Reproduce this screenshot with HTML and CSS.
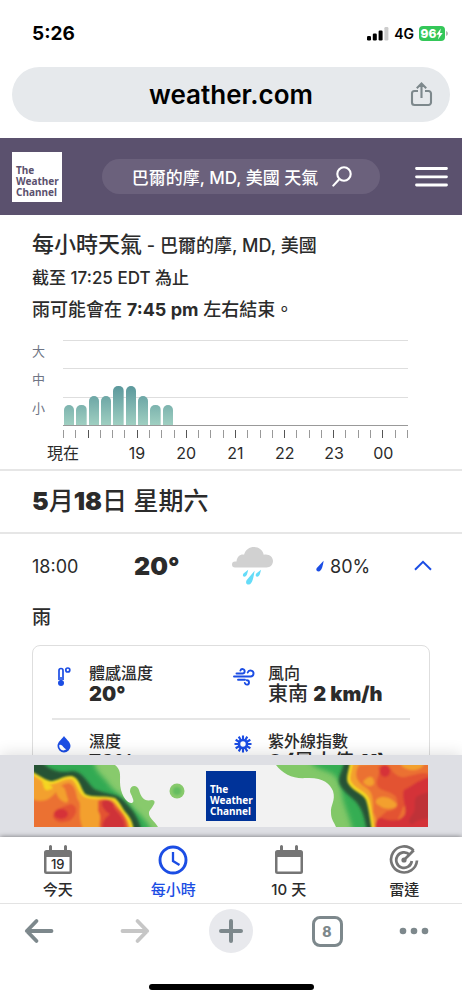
FILE: index.html
```html
<!DOCTYPE html>
<html lang="zh-Hant">
<head>
<meta charset="utf-8">
<meta name="viewport" content="width=device-width, initial-scale=1">
<title>每小時天氣 - 巴爾的摩, MD, 美國</title>
<link rel="stylesheet" href="styles.css">
</head>
<body>
<div class="app">
  <div class="status-bar">
    <span class="clock">5:26</span>
    <div class="status-icons">
      <svg class="signal" width="22" height="14" viewBox="0 0 22 14" aria-hidden="true">
        <rect x="0" y="9" width="4" height="4.5" rx="1.2"/>
        <rect x="5.8" y="6.5" width="4" height="7" rx="1.2"/>
        <rect x="11.6" y="3.5" width="4" height="10" rx="1.2"/>
        <rect x="17.4" y="0" width="4" height="13.500" rx="1.2" fill="#ccc"/>
      </svg>
      <span class="network">4G</span>
      <div class="power">
        <span class="battery"><span>96</span><svg width="7" height="12" viewBox="0 0 7 12" aria-hidden="true"><path d="M4.800 0.500 0.300 6.800h2.700L2 11.500 6.700 5H4z" fill="#fff"/></svg></span>
        <svg width="2" height="5" viewBox="0 0 2 5" aria-hidden="true"><path fill="#b5b5b5" d="M0 0c2.600.800 2.600 4.200 0 5z"/></svg>
      </div>
    </div>
  </div>

  <div class="url-bar">
    <input class="url" type="text" value="weather.com" aria-label="網址">
    <button class="share" aria-label="分享">
      <svg width="24" height="26" viewBox="0 0 24 26" fill="none" stroke="#7d888c" stroke-width="2.100">
        <path d="M8 9H4.500A2.500 2.500 0 0 0 2 11.500v9A2.500 2.500 0 0 0 4.500 23h14a2.500 2.500 0 0 0 2.500-2.500v-9A2.500 2.500 0 0 0 18.500 9H15M11.500 16V1.500M6.800 6.200l4.700-4.700 4.700 4.700"/>
      </svg>
    </button>
  </div>

  <header class="site-header">
    <a class="logo" href="#">The<br>Weather<br>Channel</a>
    <button class="search">
      <span>巴爾的摩, MD, 美國 天氣</span>
      <svg width="20" height="21" viewBox="0 0 20 21" fill="none" stroke="#fff" stroke-width="2.100" stroke-linecap="round" aria-hidden="true">
        <circle cx="12" cy="8" r="6.700"/><path d="M7.200 13.200 1.300 19.600"/>
      </svg>
    </button>
    <button class="menu" aria-label="選單">
      <svg width="33" height="22" viewBox="0 0 33 22" stroke="#fff" stroke-width="2.800" stroke-linecap="round"><path d="M1.500 2.500h30M1.500 10.800h30M1.500 19h30"/></svg>
    </button>
  </header>

  <main class="content">
    <section class="summary">
      <h1><span class="title">每小時天氣</span> - 巴爾的摩, MD, 美國</h1>
      <p>截至 17:25 EDT 為止</p>
      <p class="outlook">雨可能會在 <strong>7:45 pm</strong> 左右結束。</p>

      <div class="chart">
        <div class="levels"><span>大</span><span>中</span><span>小</span></div>
        <div class="plot">
          <div class="lines"><i></i><i></i><i></i></div>
          <div class="bars">
            <i class="low"></i><i class="low"></i><i class="mid"></i><i class="mid"></i><i class="high"></i><i class="high"></i><i class="mid"></i><i class="low"></i><i class="low"></i>
          </div>
        </div>
        <div class="ticks">
          <i></i><i></i><i></i><i></i><i></i><i></i><i></i><i></i><i></i><i></i><i></i><i></i><i></i><i></i><i></i><i></i><i></i><i></i><i></i><i></i><i></i><i></i><i></i><i></i><i></i><i></i><i></i><i></i><i></i>
        </div>
        <div class="hours">
          <span class="now">現在</span><span></span><span>19</span><span>20</span><span>21</span><span>22</span><span>23</span><span>00</span><span></span>
        </div>
      </div>
    </section>

    <h2 class="day"><b>5</b>月<b>18</b>日 星期六</h2>

    <section class="hour">
      <div class="hour-row">
        <span class="time">18:00</span>
        <span class="temp">20°</span>
        <svg class="sky" width="42" height="40" viewBox="0 0 42 40" aria-label="雨">
          <path fill="#d1d1d1" d="M3 21.500a3 3 0 0 1 0-6h1.500C5 10.500 8.500 8 12 8.700 13.500 3.500 17.500 1 22 1c5 0 8.800 3.200 9.700 7.700C36.500 7.500 41 10.500 41 15c0 3.700-2.800 6.500-6.500 6.500H3z"/>
          <path fill="#65dcf8" d="M16.200 23.800c-.7 3-1.200 7-3.800 7-2 0-1.700-2.200-.9-3.200zM22.600 24.800c-.8 5-2 13.800-5.800 13.800-2.800 0-3.400-2.600-2-4.600zM29 23.800c-.7 3-1.200 7-3.800 7-2 0-1.700-2.200-.9-3.200z"/>
        </svg>
        <span class="rain">
          <svg width="8" height="12" viewBox="0 0 8 12" aria-hidden="true"><path fill="#1b4de4" d="M7.600 0.800C7 5 5.800 11.500 2.500 11.500.300 11.500-.200 9.500.800 8z"/></svg>
          80%
        </span>
        <button class="collapse" aria-label="收合">
          <svg width="18" height="12" viewBox="0 0 18 12" fill="none" stroke="#1b4de4" stroke-width="2"><path d="M1 9.800 9 1.800l8 8"/></svg>
        </button>
      </div>
      <p class="phrase">雨</p>
      <dl class="details">
        <div class="detail">
          <svg width="24" height="24" viewBox="0 0 24 24" fill="none" stroke="#1b4de4" aria-hidden="true">
            <path d="M7 16V6.500a2 2 0 0 1 4 0V16" stroke-width="1.700"/><circle cx="9" cy="19" r="3" fill="#1b4de4" stroke="none"/><path d="M9 13v6" stroke-width="1.600"/><circle cx="15.800" cy="6" r="2" stroke-width="1.700"/>
          </svg>
          <dt>體感溫度</dt><dd><b>20°</b></dd>
        </div>
        <div class="detail">
          <svg width="24" height="24" viewBox="0 0 24 24" fill="none" stroke="#1b4de4" stroke-width="1.900" stroke-linecap="round" aria-hidden="true">
            <path d="M3 12.500h16.500a3 3 0 1 0-2.800-4M5.500 9.500h6a2.200 2.200 0 1 0-2.100-3M7 15.800h7M13.800 19c.5 1.200 1.200 1.600 2 1.600a2.200 2.200 0 0 0 0-4.400"/>
          </svg>
          <dt>風向</dt><dd>東南 <b>2 km/h</b></dd>
        </div>
        <div class="detail">
          <svg width="24" height="24" viewBox="0 0 24 24" aria-hidden="true">
            <path fill="#1b4de4" d="M12 4c2 3 6.500 6 6.500 10a6.500 6.500 0 0 1-13 0C5.500 10 10 7 12 4z"/><path fill="#fff" d="M7.300 13c3-1.200 3.500 2.500 7 4.300-3.300 2.700-7.600 0-7-4.300z"/>
          </svg>
          <dt>濕度</dt><dd><b>76%</b></dd>
        </div>
        <div class="detail">
          <svg width="24" height="24" viewBox="0 0 24 24" fill="none" stroke="#1b4de4" aria-hidden="true">
            <circle cx="12" cy="12" r="4" stroke-width="2.600"/>
            <path stroke-width="2.100" d="M12 3.500v4M12 16.500v4M3.500 12h4M16.500 12h4M7.750 4.640l2 3.460M14.250 15.900l2 3.460M4.640 7.750l3.460 2M15.900 14.250l3.460 2M4.640 16.250l3.460-2M15.900 9.750l3.460-2M7.750 19.360l2-3.460M14.250 8.100l2-3.460"/>
          </svg>
          <dt>紫外線指數</dt><dd><b>0 (</b>最大值 <b>11)</b></dd>
        </div>
      </dl>
    </section>
  </main>

  <aside class="ad">
    <a class="banner" href="#">
      <svg class="radar" width="394" height="62" viewBox="0 0 394 62" aria-hidden="true">
        <defs>
          <filter id="soft" x="-20%" y="-20%" width="140%" height="140%"><feGaussianBlur stdDeviation="2.500"/></filter>
          <filter id="band" x="-20%" y="-20%" width="140%" height="140%"><feGaussianBlur stdDeviation="1.500"/></filter>
          <filter id="edge" x="-20%" y="-20%" width="140%" height="140%"><feGaussianBlur stdDeviation="0.900"/></filter>
          <clipPath id="cl"><path d="M0 0H81C87 5 86 9 86 17c0 11 6 21 11 21 6 0-1-9-1-12 0-6 7-7 9-1 2 7 5 12 13 10 6 1 0 7-3 12-1 6 6 9 9 15H0z"/></clipPath>
          <clipPath id="cr"><path d="M242 0c7 9 17 14 30 13 16-1 24 5 27 13 3 10-3 14-2 22 0 6 3 9 5 14h92V0z"/></clipPath>
        </defs>
        <g clip-path="url(#cl)">
          <path fill="#88ca6c" d="M0 0h130v62H0z"/>
          <path filter="url(#soft)" fill="#31aa52" d="M-5-5H60C60 6 68 10 74 18C78 26 90 30 98 42C106 50 114 56 118 67H-5z"/>
          <path filter="url(#band)" fill="#285334" d="M-5-5H6C14 4 24 9 38 6C48 6 52 16 60 24C72 30 84 27 92 38C100 46 105 54 108 67H-5z"/>
          <g filter="url(#edge)">
            <path fill="#f5dc22" d="M-5 5C2 8 9 14 16 16C24 16 30 10 38 11C46 14 46 22 51 29C58 33 72 30 81 33C87 38 88 44 93 49C97 54 99 58 100 67H-5z"/>
            <path fill="#f3a02d" d="M-5 8C2 11 8 17 16 19C24 19 30 13 37 14C43 17 43 25 49 31C56 36 72 32 79 35C85 40 86 46 91 51C95 56 96 60 97 67H-5z"/>
            <path fill="#eb7133" d="M-5 32c9 6 18 4 22 0 7-5 9-14 18-14 9 4 6 14 10 18 3 7-2 13 4 28H-5z"/>
            <path fill="#f3a02d" d="M24 22c8-3 7 5 10 12 1 6-6 3-9-1-3-4-4-8-1-11z"/>
            <path fill="#f5d523" d="M8 16c5 1 8 3 11 7-6 3-8 3-9-1z"/>
            <path fill="#e35333" d="M19 52c0-8 7-9 18-13 8 2 6 12-2 17-7 2-13 2-16-4zM64 36c7-4 14-1 19 6 7 6 10 12 12 24H67c-4-7 2-13-3-20z"/>
            <ellipse cx="27" cy="49" rx="7" ry="5" fill="#d63338"/>
            <path fill="#cf3238" d="M68 37c4-4 9-2 12 2-2 4 4 7 8 14 3 4 3 8 3 14H70c-4-8 1-14 6-18-4-2-9-7-8-12z"/>
          </g>
        </g>
        <g clip-path="url(#cr)">
          <path fill="#82c868" d="M235 0h165v62H235z"/>
          <path filter="url(#soft)" fill="#35ad52" d="M275-5c4 9 18 10 25 15 8 10 7 16 9 25 2 8 6 15 10 32h80V-5z"/>
          <path filter="url(#band)" fill="#285334" d="M310-5C310 6 302 12 306 20C310 28 318 32 323 38C329 46 331 54 333 67H400V-5z"/>
          <g filter="url(#edge)">
            <path fill="#f5dc22" d="M316-5C316 4 311 12 314 18C319 27 329 28 332 35C335 44 336 54 338 67H400V-5z"/>
            <path fill="#f3a02d" d="M319-5C319 4 314 12 317 17C322 25 332 26 335 34C338 44 338 54 341 67H400V-5z"/>
            <path fill="#eb7133" d="M325 0c-6 10-2 17 6 22 9 5 8 15 8 25 2 5 4 8 6 20h55V-5z"/>
            <path fill="#f3a02d" d="M329 17c5-7 12-7 11 2-4 4-8 2-11-2zM343 34c6-4 15-2 21 7-5 3-13 4-18 0-3-2-6-3-3-7zM367-3h23c1 9-17 11-23 3z"/>
            <path fill="#e35333" d="M344 3c4-5 10-4 13 1 4 7 11 10 18 7 10-2 16-5 21-1v12c-13 7-21 18-27 20-3 8-5 14-11 20h-15c-3-8 5-11 10-16 10 0 12-7 9-14-5-6-12-5-17-9-6-7 3-13-1-20z"/>
            <ellipse cx="351" cy="6" rx="5" ry="6" fill="#d63338"/>
            <path fill="#d43339" d="M370 25c10-5 14-11 30-14v55h-58c-2-8 1-16 8-12 8 2 17 3 21-5 2-8-4-16-1-24z"/>
            <path fill="#bf3139" d="M382 32c4-3 10-4 18-6v26c-7 2-17 2-21 7-5 1-5-5-1-9 5-6 1-12 4-18z"/>
          </g>
        </g>
        <circle cx="143" cy="26" r="7.500" fill="#88ca6c"/><circle cx="143" cy="26" r="4" fill="#65bd60" filter="url(#edge)"/>
      </svg>
      <span class="logo logo-blue">The<br>Weather<br>Channel</span>
    </a>
  </aside>

  <nav class="tabs">
    <a href="#">
      <span class="today"><svg width="30" height="30" viewBox="0 0 30 30" fill="#757575" aria-hidden="true"><path fill-rule="evenodd" d="M6 1.500a1.500 1.500 0 0 1 3 0V5h12V1.500a1.500 1.500 0 0 1 3 0V5h2.500A2.500 2.500 0 0 1 29 7.500v19a2.500 2.500 0 0 1-2.500 2.500h-23A2.500 2.500 0 0 1 1 26.500v-19A2.500 2.500 0 0 1 3.500 5H6zM3.500 12v14.500h23V12z"/></svg><span class="date">19</span></span>
      今天
    </a>
    <a href="#" class="active">
      <svg width="30" height="30" viewBox="0 0 30 30" fill="none" stroke="#1b4de4" aria-hidden="true"><circle cx="15" cy="15" r="13" stroke-width="2.900"/><path d="M15 7v9l6.500 4" stroke-width="2.300"/></svg>
      每小時
    </a>
    <a href="#">
      <svg width="30" height="30" viewBox="0 0 30 30" fill="#757575" aria-hidden="true"><path fill-rule="evenodd" d="M6 1.500a1.500 1.500 0 0 1 3 0V5h12V1.500a1.500 1.500 0 0 1 3 0V5h2.500A2.500 2.500 0 0 1 29 7.500v19a2.500 2.500 0 0 1-2.500 2.500h-23A2.500 2.500 0 0 1 1 26.500v-19A2.500 2.500 0 0 1 3.500 5H6zM3.500 12v14.500h23V12z"/></svg>
      10 天
    </a>
    <a href="#">
      <svg width="30" height="30" viewBox="0 0 30 30" fill="none" stroke="#757575" stroke-width="2.700" aria-hidden="true"><path d="M24.500 5.500A13 13 0 1 0 28 15.500M20.500 9.500a7.800 7.800 0 1 0 2.300 6.500"/><path d="M15 15 24.800 5.300"/><circle cx="15" cy="15" r="2.600" fill="#757575" stroke="none"/></svg>
      雷達
    </a>
  </nav>

  <footer class="browser-bar">
    <div class="browser-buttons">
      <button aria-label="上一頁"><svg width="30" height="26" viewBox="0 0 30 26" fill="none" stroke="#7d888c" stroke-width="3.800" stroke-linecap="round" stroke-linejoin="round"><path d="M27.500 13H3M12.500 3 2.800 13l9.700 10"/></svg></button>
      <button aria-label="下一頁"><svg width="30" height="26" viewBox="0 0 30 26" fill="none" stroke="#c6c6c6" stroke-width="3.800" stroke-linecap="round" stroke-linejoin="round"><path d="M2.500 13H27M17.500 3l9.700 10-9.700 10"/></svg></button>
      <button aria-label="新分頁"><span class="plus"><svg width="26" height="26" viewBox="0 0 26 26" stroke="#7d888c" stroke-width="4" stroke-linecap="round"><path d="M13 3v20M3 13h20"/></svg></span></button>
      <button aria-label="8 個分頁"><span class="count">8</span></button>
      <button aria-label="更多"><svg width="30" height="8" viewBox="0 0 30 8" fill="#7d888c"><circle cx="4" cy="4" r="3.300"/><circle cx="15" cy="4" r="3.300"/><circle cx="26" cy="4" r="3.300"/></svg></button>
    </div>
    <div class="home-indicator"></div>
  </footer>
</div>
</body>
</html>
```
FILE: styles.css
```css
* { box-sizing: border-box; }

body, h1, h2, p, dl, dt, dd { margin: 0; }

body {
  font-family: Inter, "Noto Sans CJK TC", sans-serif;
  font-size: 17px;
  color: #2b2b2b;
  background: #fff;
}

button {
  padding: 0;
  border: 0;
  background: none;
  color: inherit;
  font: inherit;
}

a { color: inherit; text-decoration: none; }

svg { display: block; flex: none; }

.app {
  display: flex;
  flex-direction: column;
  height: 100vh;
}

.status-bar {
  display: flex;
  flex: none;
  align-items: center;
  justify-content: space-between;
  height: 67px;
  padding: 0 14px 0 32px;
  color: #000;
}

.clock { font-size: 19px; font-weight: 700; }

.status-icons { display: flex; align-items: center; gap: 5px; }

.network { font-size: 14px; font-weight: 600; }

.power { display: flex; align-items: center; gap: 1px; }

.battery {
  display: flex;
  align-items: center;
  justify-content: center;
  width: 26px;
  height: 15px;
  border-radius: 4px;
  background: #34c759;
  color: #fff;
  font-size: 12px;
  font-weight: 800;
}

.url-bar {
  display: flex;
  flex: none;
  align-items: center;
  height: 55px;
  margin: 0 12px 16px;
  padding: 0 16px;
  border-radius: 28px;
  background: #e6e9ec;
}

.url {
  flex: 1;
  min-width: 0;
  padding: 0 0 0 24px;
  border: 0;
  background: none;
  color: #000;
  font: 600 26px Inter, sans-serif;
  text-align: center;
}

.site-header {
  display: flex;
  flex: none;
  align-items: center;
  height: 77px;
  padding: 0 14px 0 12px;
  background: #5b516e;
}

.logo {
  display: flex;
  flex-direction: column;
  justify-content: flex-end;
  width: 50px;
  height: 50px;
  padding: 0 0 4px 4px;
  background: #fff;
  color: #5b516e;
  font: 700 10px/11px "Noto Sans", sans-serif;
}

.logo-blue { background: #039; color: #fff; }

.search {
  display: flex;
  flex: 1;
  align-items: center;
  justify-content: center;
  gap: 14px;
  height: 35px;
  margin: 0 35px 0 40px;
  padding-left: 2px;
  border-radius: 18px;
  background: #6b617c;
  color: #fff;
  font-weight: 500;
  white-space: nowrap;
}

.content { flex: 1; min-height: 0; overflow: hidden; }

.summary {
  padding: 15px 54px 0 32px;
  border-bottom: 2px solid #e6e6e6;
  font-weight: 500;
  line-height: 32px;
}

h1 { font-size: 18px; font-weight: 500; white-space: nowrap; }

.title { font-size: 22px; line-height: 22px; }

.outlook { font-size: 18px; }

.chart {
  display: grid;
  grid-template-columns: 31px 1fr;
  margin-top: 14px;
  font-weight: 400;
}

.levels {
  display: grid;
  grid-template-rows: 28px 29px 29px;
  color: #6f7585;
  font-size: 13px;
  line-height: 22px;
}

.plot { display: grid; border-bottom: 1px solid #999; }

.lines, .bars { grid-area: 1 / 1; }

.lines { display: grid; grid-template-rows: 28px 29px 28px; }

.lines i { border-top: 1px solid #dedede; }

.bars {
  display: grid;
  grid-template-columns: repeat(28, 1fr);
  align-items: end;
}

.bars i {
  margin: 0 1px;
  border-radius: 5px 5px 0 0;
  background: linear-gradient(#5b989c, #9fcfc1) bottom / 100% 39px;
}

.low { height: 20px; }
.mid { height: 29px; }
.high { height: 39px; }

.ticks {
  display: flex;
  grid-column: 2;
  justify-content: space-between;
  height: 8px;
  margin-top: 4px;
}

.ticks i { width: 1px; background: #999; }

.ticks i:nth-child(4n + 3) { background: #555; }

.hours {
  display: grid;
  grid-column: 2;
  grid-template-columns: 2fr 2fr repeat(6, 4fr) 0;
  font-size: 16px;
  line-height: 31px;
  text-align: center;
}

.now { margin-left: -16px; white-space: nowrap; text-align: left; }

.day {
  padding: 0 32px;
  border-bottom: 2px solid #e6e6e6;
  font-size: 25px;
  font-weight: 500;
  line-height: 61px;
}

.day b { font-weight: 900; }

.hour-row {
  display: grid;
  grid-template-columns: 102fr 98fr 84fr 98fr 18px;
  align-items: center;
  height: 64px;
  padding: 0 30px 0 32px;
}

.time, .rain { font-size: 18px; }

.temp { font-size: 25px; font-weight: 900; }

.rain { display: flex; align-items: center; gap: 6px; }

.phrase {
  padding: 0 32px;
  font-size: 19px;
  font-weight: 500;
  line-height: 40px;
}

.details {
  display: grid;
  grid-template-columns: 1fr 1fr;
  margin: 7px 32px 0;
  padding: 0 19px;
  border: 1px solid #dedede;
  border-radius: 8px;
}

.detail {
  display: grid;
  grid-template-columns: 24px 1fr;
  column-gap: 13px;
  padding: 18px 0 13px;
  font-weight: 500;
}

.detail:nth-child(n + 3) { padding-top: 12px; border-top: 2px solid #e6e6e6; }

.detail svg { grid-row: 1 / 3; }

dt { font-size: 16px; line-height: 19px; }

dd { font-size: 20px; line-height: 22px; white-space: nowrap; }

dd b { font-weight: 900; }

.ad {
  position: relative;
  flex: none;
  padding: 10px 0;
  background: #dedfe4;
  box-shadow: 0 -2px 14px rgba(0, 0, 0, 0.12);
}

.banner {
  display: grid;
  place-items: center;
  width: 394px;
  max-width: 100%;
  height: 62px;
  margin: 0 auto;
  overflow: hidden;
  background: #f2f2f2;
}

.radar, .logo-blue { grid-area: 1 / 1; }

.tabs {
  position: relative;
  display: grid;
  flex: none;
  grid-template-columns: repeat(4, 1fr);
  height: 67px;
  border-bottom: 1px solid #e3e3e3;
  background: #fff;
  box-shadow: 0 0 5px rgba(0, 0, 0, 0.5);
  clip-path: inset(-8px 0 0);
}

.tabs a {
  display: flex;
  flex-direction: column;
  align-items: center;
  padding-top: 8px;
  font-size: 15px;
  font-weight: 500;
  line-height: 29px;
}

.tabs .active { color: #1b4de4; }

.today { display: grid; place-items: center; }

.today > * { grid-area: 1 / 1; }

.date { padding-top: 7px; font-size: 13px; line-height: 20px; }

.browser-bar {
  display: flex;
  flex: none;
  flex-direction: column;
  align-items: center;
  height: 96px;
}

.browser-buttons {
  display: grid;
  grid-template-columns: 87fr 96fr 96fr 96fr 87fr;
  width: 100%;
  height: 54px;
}

.browser-buttons button {
  display: flex;
  align-items: center;
  justify-content: center;
}

.browser-buttons button:first-child,
.browser-buttons button:last-child { padding-right: 9px; }

.plus {
  display: grid;
  place-items: center;
  width: 44px;
  height: 44px;
  border-radius: 50%;
  background: #e8e9ed;
}

.count {
  width: 31px;
  height: 31px;
  border: 3px solid #7d888c;
  border-radius: 8px;
  color: #7d888c;
  font-size: 14px;
  font-weight: 800;
  line-height: 25px;
}

.home-indicator {
  width: 165px;
  height: 6px;
  margin-top: 26px;
  border-radius: 3px;
  background: #000;
}
```
